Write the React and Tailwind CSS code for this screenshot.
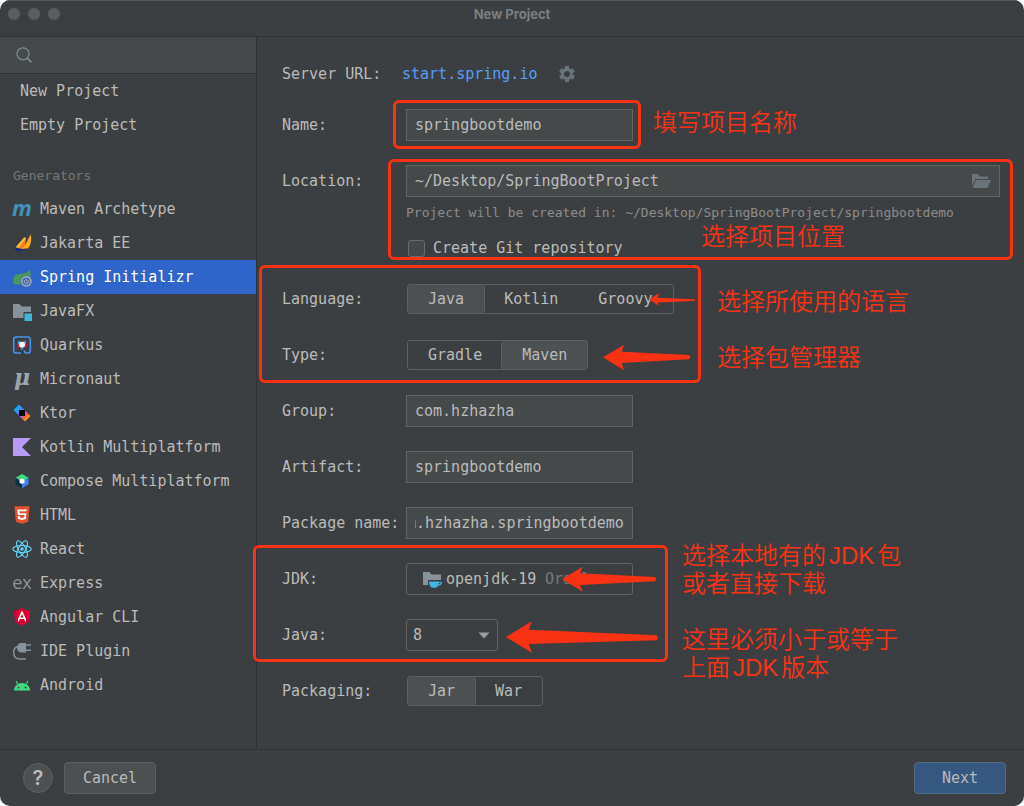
import React, { useEffect, useRef } from "react";
import { FaHtml5, FaAngular } from "react-icons/fa";
import { MdSettings } from "react-icons/md";

const MONO = "font-['DejaVu_Sans_Mono',monospace]";

function Svg({ children, className = "h-5 w-5" }) {
  return (
    <svg viewBox="0 0 20 20" className={className} aria-hidden="true">
      {children}
    </svg>
  );
}

const icons = {
  maven: (
    <span aria-hidden="true" className="pb-1 font-['Open_Sans',sans-serif] text-[22px] leading-5 font-bold text-[#3e93b6] italic">
      m
    </span>
  ),
  jakarta: (
    <Svg>
      <path d="M3.500 14.300 12.500 4l1.500 1.500L10.500 16Z" fill="#fdb940" />
      <path d="M6.500 15.200 13.800 5.500 13 16Z" fill="#f58219" />
      <path d="M10.500 16c3.500-4 5-9.500 8.300-14.500.7 5.500.3 10.500-2.800 14Z" fill="#ffad12" />
      <path d="M2 14.500c4 1.300 8 1.800 13.500 1-2.500 2-6 1.500-9 3.200C5 17.800 3 16.500 2 14.500Z" fill="#1a2b87" />
    </Svg>
  ),
  spring: (
    <Svg>
      <path d="M1.500 16C.5 10 2.500 7.500 8 7 12.500 6.700 16 5.500 18 2.500c.7 3 1 6 .4 8.500L12 17.500H4.500C3 17.600 2 17 1.500 16Z" fill="#4b9a58" />
      <circle cx="14.300" cy="14.300" r="6" fill="#2f65ca" />
      <circle cx="14.300" cy="14.300" r="4.600" fill="none" stroke="#9aa7b0" strokeWidth="1.900" />
      <path d="M12.700 13.200a2 2 0 1 0 3.200 0M14.300 11.500v2.700" fill="none" stroke="#9aa7b0" strokeWidth="1.200" />
    </Svg>
  ),
  javafx: (
    <Svg>
      <path d="M1 3h6.500l2 2.500H19V11h-7.500v6H1Z" fill="#87939a" />
      <path d="M12.500 12.500H20V20h-7.500Z" fill="#40b6e0" />
    </Svg>
  ),
  quarkus: (
    <Svg>
      <path d="M9 18H4a2.300 2.300 0 0 1-2.300-2.300V4.300A2.300 2.300 0 0 1 4 2h12a2.300 2.300 0 0 1 2.300 2.300v11.400A2.300 2.300 0 0 1 16 18h-2.500L12 15.500" fill="none" stroke="#4695eb" strokeWidth="1.600" />
      <path d="M6 5.500 9.500 7 6 10Zm8 0L10.500 7 14 10Z" fill="#4695eb" />
      <path d="M5 8.500 9 9.500 6 13.500Zm10 0L11 9.500l3 4Z" fill="#ff004a" />
      <circle cx="10" cy="9.800" r="3" fill="#fff" />
      <path d="m8.500 12.500 1.500 3 1.500-3Z" fill="#4695eb" />
    </Svg>
  ),
  micronaut: (
    <span aria-hidden="true" className="pb-1 font-['DejaVu_Serif',serif] text-[22px] leading-5 font-bold text-[#9aa7b0] italic">
      μ
    </span>
  ),
  ktor: (
    <Svg>
      <defs>
        <linearGradient id="ktorFill" x1="0" y1="0" x2="1" y2="1">
          <stop offset="0.2" stopColor="#00afff" />
          <stop offset="0.4" stopColor="#5282ff" />
          <stop offset="0.55" stopColor="#b45cff" />
          <stop offset="0.7" stopColor="#f0683e" />
          <stop offset="0.85" stopColor="#ff9a00" />
        </linearGradient>
      </defs>
      <path d="M7 1.500 18.500 13 13 18.500 1.500 7Z" fill="url(#ktorFill)" />
      <path d="M7 7h6v6H7Z" fill="#000" />
    </Svg>
  ),
  kotlin: (
    <Svg>
      <path d="M1 1h18l-9 9 9 9H1Z" fill="#b99bf8" />
    </Svg>
  ),
  compose: (
    <Svg>
      <path d="m10 3 6.500 3.700L10 11 3.500 6.700Z" fill="#3ddc84" />
      <path d="M3.500 6.700 10 10.500V17l-6.500-3.700Z" fill="#083042" />
      <path d="m16.500 6.700-6.500 4V17l6.500-3.700Z" fill="#4285f4" />
      <path d="m10 7.500 2.500 1.300v2.900L10 13l-2.500-1.300V8.800Z" fill="#fff" />
    </Svg>
  ),
  html: (
    <span className="relative flex h-5 w-5 items-center justify-center">
      <span className="absolute inset-x-1 inset-y-1 bg-white" />
      <FaHtml5 className="relative h-5 w-5 text-[#e5532d]" />
    </span>
  ),
  react: (
    <Svg>
      <g fill="none" stroke="#61dafb" strokeWidth="1.100">
        <ellipse cx="10" cy="10" rx="9.200" ry="3.500" />
        <ellipse cx="10" cy="10" rx="9.200" ry="3.500" transform="rotate(60 10 10)" />
        <ellipse cx="10" cy="10" rx="9.200" ry="3.500" transform="rotate(120 10 10)" />
      </g>
      <circle cx="10" cy="10" r="1.700" fill="#61dafb" />
    </Svg>
  ),
  express: (
    <span aria-hidden="true" className="pb-0.5 font-['Open_Sans',sans-serif] text-[18px] leading-5 text-[#87939a]">
      ex
    </span>
  ),
  angular: (
    <span className="relative flex h-5 w-5 items-center justify-center">
      <span className="absolute inset-x-1.5 inset-y-1 bg-white" />
      <FaAngular className="relative h-5 w-5 text-[#dd0031]" />
    </span>
  ),
  plugin: (
    <Svg>
      <path d="M14 2v9.500H9C6.500 11.500 5 9.500 5 6.800S6.500 2 9 2Z" fill="#87939a" />
      <path d="M14 4h5M14 9.200h5" stroke="#87939a" strokeWidth="1.500" />
      <path d="M6 5.500C3 6 1.700 8.500 1.700 11.500c0 4 2.300 6.500 6 6.500H14" fill="none" stroke="#87939a" strokeWidth="1.400" />
    </Svg>
  ),
  android: (
    <Svg>
      <path d="M2 15.500a8 7.500 0 0 1 16 0Z" fill="#3ddc84" />
      <path d="M6 9.500 4 6M14 9.500 16 6" stroke="#3ddc84" strokeWidth="1.200" />
      <circle cx="6.500" cy="12.500" r=".9" fill="#3c3f41" />
      <circle cx="13.500" cy="12.500" r=".9" fill="#3c3f41" />
    </Svg>
  ),
};

const generators = [
  ["maven", "Maven Archetype"],
  ["jakarta", "Jakarta EE"],
  ["spring", "Spring Initializr"],
  ["javafx", "JavaFX"],
  ["quarkus", "Quarkus"],
  ["micronaut", "Micronaut"],
  ["ktor", "Ktor"],
  ["kotlin", "Kotlin Multiplatform"],
  ["compose", "Compose Multiplatform"],
  ["html", "HTML"],
  ["react", "React"],
  ["express", "Express"],
  ["angular", "Angular CLI"],
  ["plugin", "IDE Plugin"],
  ["android", "Android"],
];

function Sidebar() {
  return (
    <aside className="flex w-[257px] shrink-0 flex-col border-r border-[#2f3132]">
      <div className="flex h-[37px] items-center border-b border-[#2f3132] bg-[#45494a] pl-4">
        <svg viewBox="0 0 16 16" className="h-4 w-4 shrink-0" fill="none" stroke="#7a8b94" strokeWidth="1.300" aria-hidden="true">
          <circle cx="7" cy="6.800" r="6" />
          <path d="m11.300 11.200 4 4" strokeWidth="1.900" />
        </svg>
        <input type="search" aria-label="Search" className="min-w-0 flex-1 bg-transparent px-2 outline-none" />
      </div>
      <nav>
        {["New Project", "Empty Project"].map((name) => (
          <button key={name} type="button" className="flex h-[34px] w-full items-center pl-5 text-left">
            {name}
          </button>
        ))}
        <h2 className="mt-[18px] flex h-8 items-center pl-[13px] text-[13px] text-[#777777]">Generators</h2>
        {generators.map(([icon, name]) => (
          <button
            key={name}
            type="button"
            className={
              icon === "spring"
                ? "flex h-[34px] w-full items-center gap-2 bg-[#2f65ca] pl-3 text-left text-white"
                : "flex h-[34px] w-full items-center gap-2 pl-3 text-left"
            }
          >
            <span className="flex h-5 w-5 shrink-0 items-center justify-center">{icons[icon]}</span>
            {name}
          </button>
        ))}
      </nav>
    </aside>
  );
}

function Row({ label, id, children }) {
  return (
    <div className="flex h-14 items-center">
      {id ? (
        <label htmlFor={id} className="w-[124px] shrink-0 whitespace-nowrap">
          {label}
        </label>
      ) : (
        <span className="w-[124px] shrink-0 whitespace-nowrap">{label}</span>
      )}
      {children}
    </div>
  );
}

function TextField({ id, value }) {
  const ref = useRef(null);
  useEffect(() => {
    ref.current.scrollLeft = ref.current.scrollWidth;
  }, []);
  return (
    <input
      ref={ref}
      id={id}
      type="text"
      defaultValue={value}
      className="h-8 w-[227px] border border-[#646464] bg-[#45494a] px-2 outline-none"
    />
  );
}

function Segmented({ label, options, selected }) {
  return (
    <div role="group" aria-label={label} className="ml-px flex h-[30px] rounded-[3px] border border-[#5e6060]">
      {options.map((option, i) => (
        <button
          key={option}
          type="button"
          aria-pressed={option === selected}
          className={
            option === selected
              ? `bg-[#4c5052] px-5 ${i === 0 ? "rounded-r-[3px] shadow-[1px_0_0_#5e6060]" : "rounded-l-[3px] shadow-[-1px_0_0_#5e6060]"}`
              : "px-5"
          }
        >
          {option}
        </button>
      ))}
    </div>
  );
}

function ProjectForm() {
  return (
    <form className="min-w-0 flex-1 pt-3.5 pr-6 pl-[25px]" onSubmit={(e) => e.preventDefault()}>
      <div className="flex h-[46px] items-center">
        <span className="w-[120px] shrink-0">Server URL:</span>
        <a href="https://start.spring.io" className="text-[#589df6]">
          start.spring.io
        </a>
        <button type="button" aria-label="Server settings" className="ml-5 text-[#6a7378]">
          <MdSettings className="h-5 w-5" />
        </button>
      </div>
      <Row label="Name:" id="name">
        <TextField id="name" value="springbootdemo" />
      </Row>
      <div className="flex pt-3 pb-[13px]">
        <label htmlFor="location" className="flex h-8 w-[124px] shrink-0 items-center">
          Location:
        </label>
        <div className="min-w-0 flex-1">
          <div className="flex h-8 items-center border border-[#646464] bg-[#45494a] pr-2 pl-2">
            <input id="location" type="text" defaultValue="~/Desktop/SpringBootProject" className="min-w-0 flex-1 bg-transparent outline-none" />
            <button type="button" aria-label="Browse">
              <svg viewBox="0 0 20 16" className="h-4 w-5" fill="#6a7378" aria-hidden="true">
                <path d="M1 1h6l2 2.500h8V6H4.500L1 13Z" />
                <path d="M5 7h15l-3.500 8H1.500Z" />
              </svg>
            </button>
          </div>
          <p className="mt-1.5 text-[13px] leading-5 whitespace-nowrap text-[#8c8c8c]">
            Project will be created in: ~/Desktop/SpringBootProject/springbootdemo
          </p>
          <label className="mt-[15px] flex h-5 items-center gap-2">
            <input type="checkbox" className="ml-0.5 h-[17px] w-[17px] appearance-none rounded-[3px] border border-[#6b6b6b] bg-[#43494a]" />
            Create Git repository
          </label>
        </div>
      </div>
      <Row label="Language:">
        <Segmented label="Language" options={["Java", "Kotlin", "Groovy"]} selected="Java" />
      </Row>
      <Row label="Type:">
        <Segmented label="Type" options={["Gradle", "Maven"]} selected="Maven" />
      </Row>
      <Row label="Group:" id="group">
        <TextField id="group" value="com.hzhazha" />
      </Row>
      <Row label="Artifact:" id="artifact">
        <TextField id="artifact" value="springbootdemo" />
      </Row>
      <Row label="Package name:" id="package">
        <TextField id="package" value="com.hzhazha.springbootdemo" />
      </Row>
      <Row label="JDK:" id="jdk">
        <div className="flex h-8 w-[227px] items-center rounded-[3px] border border-[#646464] pl-[15px]">
          <Svg className="h-5 w-5 shrink-0">
            <path d="M1 3h6.500l2 2.500H19V11H6v5H1Z" fill="#87939a" />
            <path d="M7 12.500h10c0 3.500-1.500 5.500-3 6.200h-4C8.500 18 7 16 7 12.500Z" fill="#40b6e0" />
            <path d="M16 13.500h3.300c0 1.800-1.300 2.500-3.300 2.500" fill="none" stroke="#40b6e0" strokeWidth="1.200" />
          </Svg>
          <select id="jdk" className="ml-1 appearance-none bg-transparent outline-none">
            <option>openjdk-19</option>
          </select>
          <span className="ml-2 text-[#777777]">Oracle</span>
        </div>
      </Row>
      <Row label="Java:" id="java">
        <div className="relative">
          <select id="java" className="h-8 w-[92px] appearance-none rounded-[3px] border border-[#646464] bg-transparent pl-1.5 outline-none">
            <option>8</option>
          </select>
          <svg viewBox="0 0 12 8" className="pointer-events-none absolute top-3 right-2 h-2 w-3" fill="#9a9da0" aria-hidden="true">
            <path d="M0.500 1.500h11L6 7.500Z" />
          </svg>
        </div>
      </Row>
      <Row label="Packaging:">
        <Segmented label="Packaging" options={["Jar", "War"]} selected="Jar" />
      </Row>
    </form>
  );
}

const frames = [
  "left-[393px] top-[100px] h-[49px] w-[248px]",
  "left-[388px] top-[159px] h-[101px] w-[625px]",
  "left-[259px] top-[265px] h-[118px] w-[442px]",
  "left-[253px] top-[545px] h-[117px] w-[415px]",
];

const notes = [
  ["left-[653px] top-[109px]", ["填写项目名称"]],
  ["left-[701px] top-[223px]", ["选择项目位置"]],
  ["left-[717px] top-[288px]", ["选择所使用的语言"]],
  ["left-[717px] top-[344px]", ["选择包管理器"]],
  ["left-[682px] top-[542px]", ["选择本地有的JDK包", "或者直接下载"]],
  ["left-[682px] top-[626px]", ["这里必须小于或等于", "上面JDK版本"]],
];

function Annotations() {
  return (
    <div className="pointer-events-none absolute inset-0 text-[#fa3214]">
      {frames.map((place) => (
        <div key={place} className={`absolute rounded-[6px] border-3 border-[#fa3214] ${place}`} />
      ))}
      <svg viewBox="0 0 200 370" className="absolute top-[290px] left-[503px] h-[370px] w-[200px]" fill="#fa3214" aria-hidden="true">
        <path d="M146 9.300 156 3.300 154.500 7.700 191 9.300Q193 10 191 11L154.500 12.500 156 16Z" />
        <path d="M100 67.300 121 55 118.700 61.700 186 65Q188.500 67 186 69.300L118.700 73 121 80.300Z" />
        <path d="M59.300 289 79.700 276.700 77 283.300 152 287Q154 289 152 291.300L77 295 79.700 301.700Z" />
        <path d="M3 347 29 331.300 25.700 339.700 153.500 345.300Q156 348 153.500 350.300L25.700 354 29 362.700Z" />
      </svg>
      {notes.map(([place, lines]) => (
        <p key={place} className={`absolute font-['Liberation_Sans','Noto_Sans_CJK_SC',sans-serif] text-[24px] leading-7 font-[350] whitespace-nowrap [text-autospace:normal] ${place}`}>
          {lines.map((line) => (
            <span key={line} className="block">
              {line}
            </span>
          ))}
        </p>
      ))}
    </div>
  );
}

export default function App() {
  return (
    <div className={`relative flex min-h-screen flex-col overflow-hidden rounded-[10px] bg-[#3c3f41] text-[15px] leading-5 text-[#bbbbbb] ${MONO}`}>
      <header className="relative flex h-[37px] items-start justify-center border-t border-b border-t-[#55595b] border-b-[#2f3132] pt-[3px]">
        <div className="absolute top-[7px] left-2 flex gap-2">
          <span className="h-3 w-3 rounded-full bg-[#5b5c5d]" />
          <span className="h-3 w-3 rounded-full bg-[#5b5c5d]" />
          <span className="h-3 w-3 rounded-full bg-[#5b5c5d]" />
        </div>
        <h1 className="font-['Inter',sans-serif] text-[13px] font-bold text-[#7b7d7e]">New Project</h1>
      </header>
      <main className="flex flex-1">
        <Sidebar />
        <ProjectForm />
      </main>
      <footer className="flex h-[57px] items-center border-t border-[#2f3132] pr-[18px] pl-[23px]">
        <button type="button" aria-label="Help" className="h-[30px] w-[30px] rounded-full border border-[#5e6060] bg-[#4c5052] font-['Inter',sans-serif] text-[20px] font-semibold">
          ?
        </button>
        <button type="button" className="ml-[11px] h-8 w-[92px] rounded-[4px] border border-[#5e6060] bg-[#4c5052]">
          Cancel
        </button>
        <button type="button" className="ml-auto h-8 w-[92px] rounded-[4px] border border-[#4c708c] bg-[#365880]">
          Next
        </button>
      </footer>
      <Annotations />
    </div>
  );
}
